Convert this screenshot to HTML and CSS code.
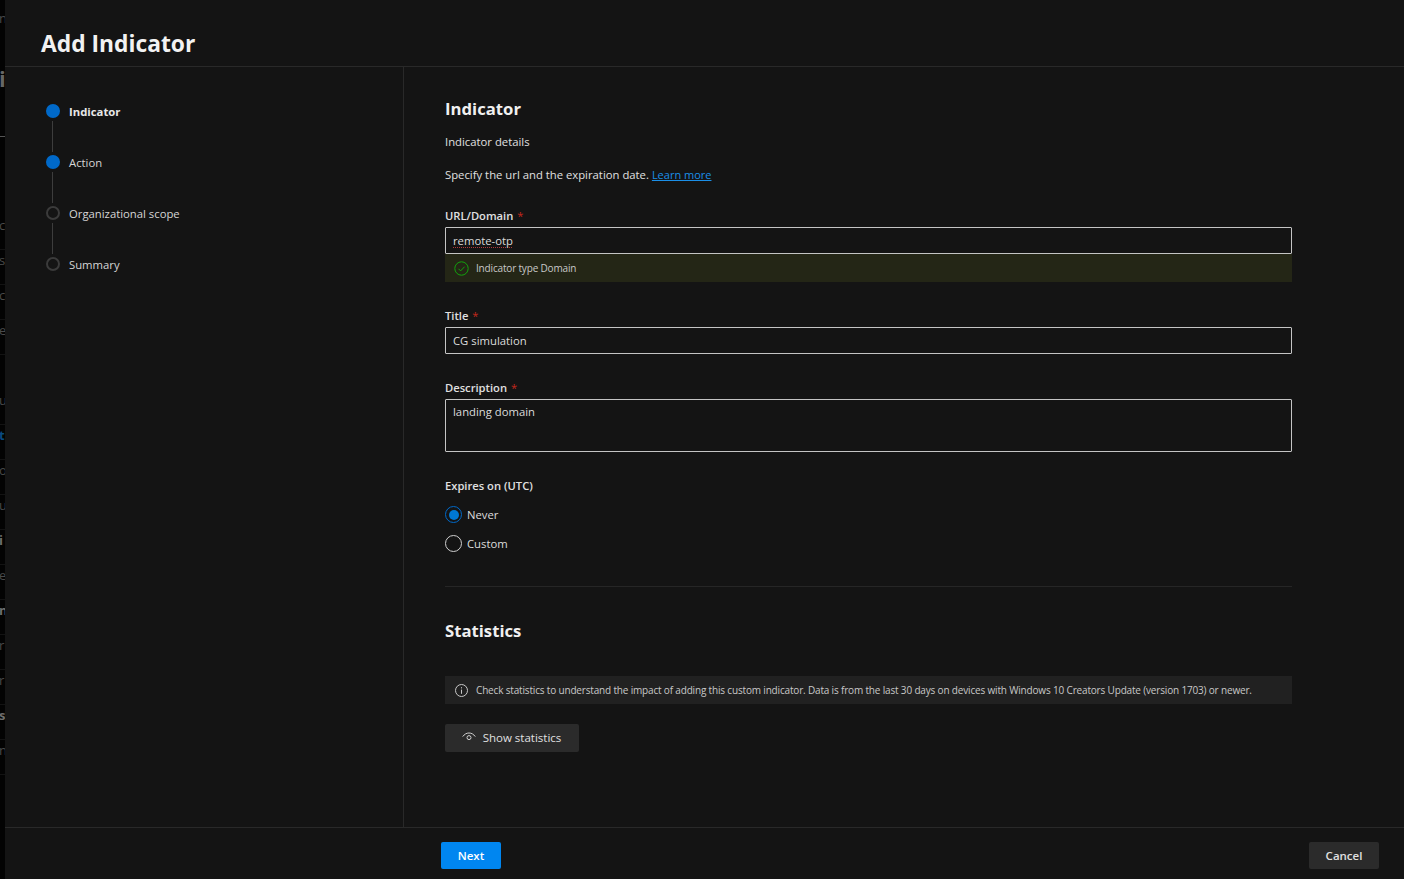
FILE: index.html
```html
<!DOCTYPE html>
<html lang="en">
<head>
<meta charset="utf-8">
<title>Add Indicator</title>
<link rel="stylesheet" href="styles.css">
</head>
<body>
<div class="app">
  <aside class="backdrop">
    <div class="bd-row bd-r1"><span>n</span></div>
    <div class="bd-row bd-r2 bd-big"><span>i</span></div>
    <div class="bd-row"><span>c</span></div>
    <div class="bd-row"><span>s</span></div>
    <div class="bd-row"><span>c</span></div>
    <div class="bd-row"><span>e</span></div>
    <div class="bd-row bd-r4"><span>u</span></div>
    <div class="bd-row bd-blue"><span>t</span></div>
    <div class="bd-row"><span>o</span></div>
    <div class="bd-row"><span>u</span></div>
    <div class="bd-row bd-bold"><span>i</span></div>
    <div class="bd-row"><span>e</span></div>
    <div class="bd-row bd-bold"><span>n</span></div>
    <div class="bd-row"><span>r</span></div>
    <div class="bd-row"><span>r</span></div>
    <div class="bd-row bd-bold"><span>s</span></div>
    <div class="bd-row"><span>n</span></div>
  </aside>
  <div class="panel">
    <header class="panel-head"><h1>Add Indicator</h1></header>
    <div class="panel-body">
      <nav class="steps">
        <div class="step done current"><span class="dot"></span><span class="step-label">Indicator</span></div>
        <div class="step done"><span class="dot"></span><span class="step-label">Action</span></div>
        <div class="step"><span class="dot"></span><span class="step-label">Organizational scope</span></div>
        <div class="step last"><span class="dot"></span><span class="step-label">Summary</span></div>
      </nav>
      <main class="content">
        <h2 class="section-title">Indicator</h2>
        <p class="sub">Indicator details</p>
        <p class="sub spec">Specify the url and the expiration date. <a href="#">Learn more</a></p>

        <label class="field-label first">URL/Domain <b>*</b></label>
        <div class="input"><span class="squiggle">remote-otp</span></div>
        <div class="msg msg-ok">
          <svg width="15" height="15" viewBox="0 0 15 15"><circle cx="7.5" cy="7.5" r="6.7" fill="none" stroke="#13a10e"/><path d="M4.5 7.8l2.1 2.1 4-4.2" fill="none" stroke="#13a10e"/></svg>
          <span>Indicator type Domain</span>
        </div>

        <label class="field-label l-title">Title <b>*</b></label>
        <div class="input">CG simulation</div>

        <label class="field-label l-desc">Description <b>*</b></label>
        <div class="input textarea">landing domain</div>

        <div class="field-label l-exp">Expires on (UTC)</div>
        <div class="radio on"><span class="ring"></span>Never</div>
        <div class="radio"><span class="ring"></span>Custom</div>

        <hr class="rule">

        <h2 class="section-title stats">Statistics</h2>
        <div class="msg msg-info">
          <svg width="15" height="15" viewBox="0 0 15 15"><circle cx="7.5" cy="7.5" r="6" fill="none" stroke="#c8c8c8"/><path d="M7.5 6.6v4.2M7.5 4.2v1.2" fill="none" stroke="#c8c8c8"/></svg>
          <span>Check statistics to understand the impact of adding this custom indicator. Data is from the last 30 days on devices with Windows 10 Creators Update (version 1703) or newer.</span>
        </div>
        <button class="btn btn-stats">
          <svg width="14" height="10" viewBox="0 0 14 10"><path d="M.7 4.6C2.4 2.2 4.6 1 7 1s4.6 1.2 6.3 3.6" fill="none" stroke="#d0d0d0"/><circle cx="7" cy="5.6" r="2" fill="none" stroke="#d0d0d0"/></svg>
          <span>Show statistics</span>
        </button>
      </main>
    </div>
    <footer class="panel-foot">
      <button class="btn btn-next">Next</button>
      <button class="btn btn-cancel">Cancel</button>
    </footer>
  </div>
</div>
</body>
</html>
```
FILE: styles.css
```css
* { box-sizing: border-box; }
html, body { margin: 0; height: 100%; overflow: hidden; }
body {
  background: #000;
  color: #e6e6e6;
  font-family: "Open Sans", "Noto Sans", sans-serif;
  font-size: 12px;
}
.app { display: flex; height: 879px; width: 1404px; }

.backdrop {
  width: 5px;
  flex: none;
  overflow: hidden;
  background: #030303;
  padding-top: 8px;
  color: #4a4a4a;
  font-size: 13px;
  line-height: 20px;
}
.bd-row {
  height: 35px;
  display: flex;
  white-space: nowrap;
  border-bottom: 1px solid #131313;
}
.bd-row span { display: block; margin-left: -1px; }
.bd-r1 { height: 60px; border-bottom: 0; }
.bd-r2 { height: 147px; border-bottom: 0; background: linear-gradient(#030303 68px, #555 68px, #555 69px, #030303 69px); }
.bd-big { font-size: 22px; color: #666; font-weight: 700; }
.bd-r4 { margin-top: 35px; }
.bd-blue { color: #0a4a80; font-weight: 700; }
.bd-bold { color: #6e6e6e; font-weight: 700; }

.panel {
  flex: 1;
  min-width: 0;
  background: #141414;
  display: flex;
  flex-direction: column;
}
.panel-head {
  height: 67px;
  flex: none;
  border-bottom: 1px solid #292929;
  padding: 28px 0 0 36px;
}
.panel-head h1 {
  margin: 0;
  font-size: 22.8px;
  line-height: 32px;
  font-weight: 700;
  color: #f2f2f2;
}
.panel-body { flex: 1; display: flex; min-height: 0; }

.steps {
  width: 399px;
  flex: none;
  border-right: 1px solid #292929;
  padding: 37px 0 0 41px;
}
.step {
  height: 51px;
  display: flex;
  align-items: flex-start;
  gap: 9px;
  position: relative;
  color: #d6d6d6;
  line-height: 16px;
}
.step::after {
  content: "";
  position: absolute;
  left: 6px;
  top: 17px;
  height: 31px;
  width: 1px;
  background: #3d3d3d;
}
.step.last::after { display: none; }
.dot {
  width: 14px;
  height: 14px;
  border-radius: 50%;
  border: 2px solid #3b3b3b;
  flex: none;
}
.step.done .dot { background: #0069c9; border-color: #0069c9; }
.step-label { font-size: 11.3px; }
.step.current .step-label { font-weight: 700; color: #e8e8e8; }

.content { width: 847px; margin-left: 41px; padding-top: 30px; }
.section-title {
  margin: 0;
  font-size: 16.7px;
  line-height: 24px;
  font-weight: 700;
  color: #f0f0f0;
}
.sub { margin: 12px 0 0; line-height: 17px; font-size: 11.3px; color: #e0e0e0; }
.spec { margin-top: 16px; }
.sub a { color: #1b8fe8; font-size: 11px; }

.field-label {
  display: block;
  font-size: 11.2px;
  line-height: 16px;
  font-weight: 600;
  color: #e0e0e0;
}
.field-label b { color: #c4281c; font-weight: 400; margin-left: 1px; }
.first { margin-top: 25px; }
.l-title { margin-top: 26px; }
.l-desc { margin-top: 26px; }
.l-exp { margin-top: 26px; }

.input {
  margin-top: 3px;
  height: 27px;
  border: 1px solid #c4c4c4;
  border-radius: 1px;
  padding: 0 7px;
  line-height: 25px;
  font-size: 11.3px;
  color: #dcdcdc;
}
.textarea { height: 53px; line-height: 24px; }
.squiggle { text-decoration: underline dotted #b03a3a 1px; text-underline-offset: 2px; }

.msg {
  display: flex;
  align-items: center;
  gap: 7px;
  padding-left: 9px;
  height: 28px;
  font-size: 10px;
  letter-spacing: -0.17px;
  color: #c8c8c8;
}
.msg-ok { background: #242616; }
.msg-info { background: #212121; margin-top: 33px; white-space: nowrap; }

.radio {
  display: flex;
  align-items: center;
  gap: 5px;
  height: 29px;
  font-size: 11.3px;
  color: #dcdcdc;
}
.l-exp + .radio { margin-top: 6px; }
.ring {
  width: 17px;
  height: 17px;
  border-radius: 50%;
  border: 1px solid #d0d0d0;
  background: transparent;
  position: relative;
  flex: none;
}
.radio.on .ring { border: 1.5px solid #0069c9; }
.radio.on .ring::after {
  content: "";
  position: absolute;
  inset: 2.5px;
  border-radius: 50%;
  background: #0078d4;
}
.rule { border: 0; border-top: 1px solid #262626; margin: 28px 0 0; }
.stats { margin-top: 32px; }

.btn {
  border: 0;
  border-radius: 2px;
  font-family: inherit;
  font-size: 11.5px;
  font-weight: 500;
  display: inline-flex;
  align-items: center;
  justify-content: center;
}
.btn-stats {
  margin-top: 20px;
  width: 134px;
  height: 28px;
  gap: 7px;
  padding: 0 1px 2px 0;
  background: #2b2b2b;
  color: #e0e0e0;
}
.panel-foot {
  height: 52px;
  flex: none;
  border-top: 1px solid #292929;
  padding: 14px 25px 0 436px;
  display: flex;
  justify-content: space-between;
  align-items: flex-start;
}
.btn-next { width: 60px; height: 27px; background: #0086f0; color: #fff; font-weight: 600; }
.btn-cancel { width: 70px; height: 27px; background: #2b2b2b; color: #e0e0e0; font-weight: 600; }
```
